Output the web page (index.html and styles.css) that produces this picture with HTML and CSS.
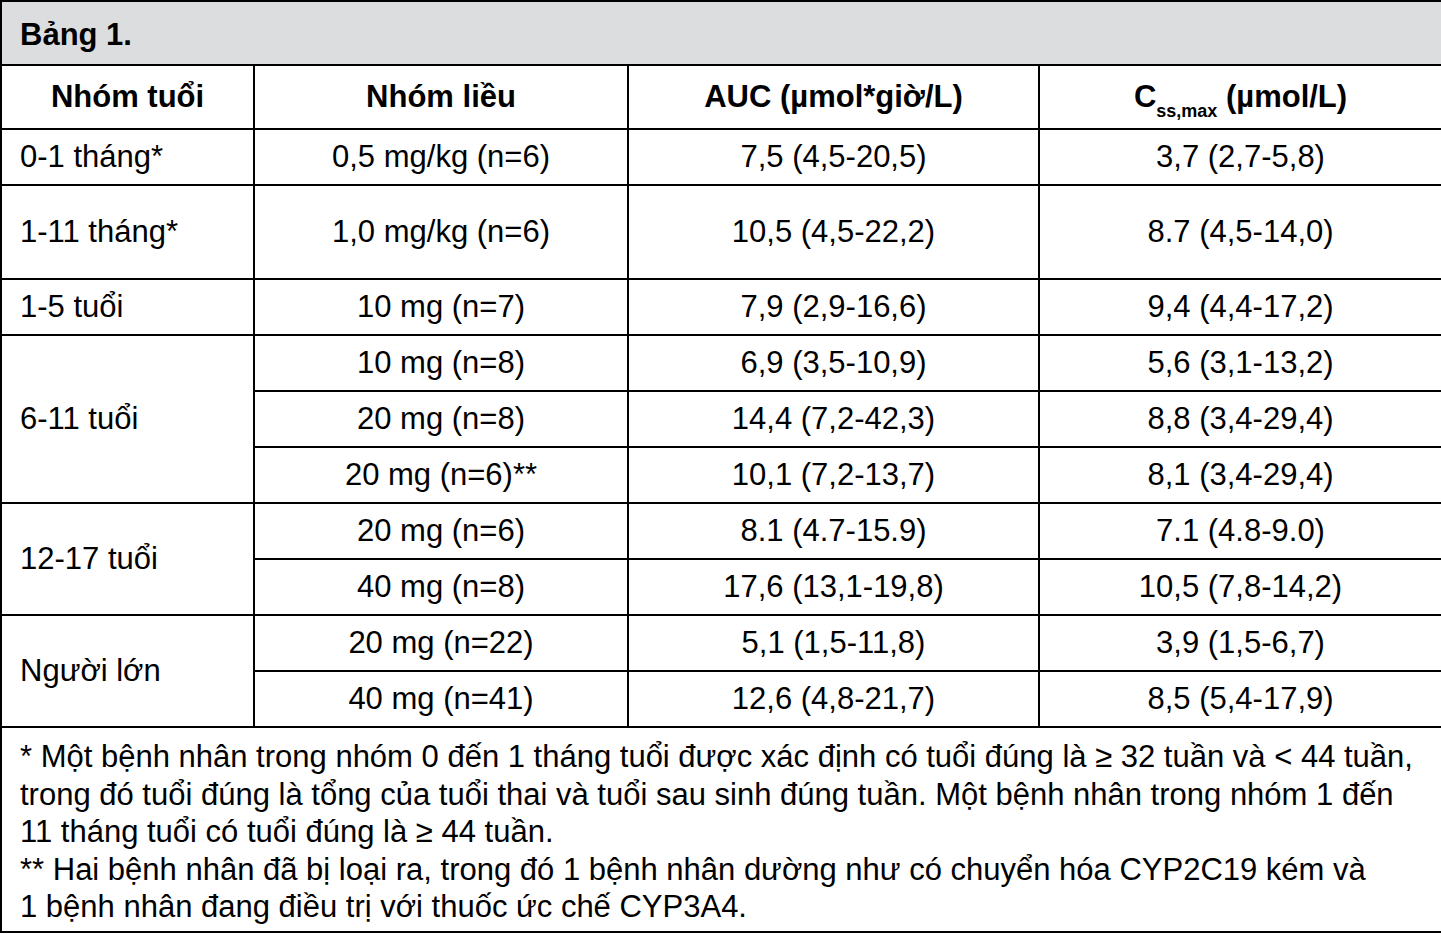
FILE: index.html
```html
<!DOCTYPE html>
<html lang="vi">
<head>
<meta charset="utf-8">
<link rel="stylesheet" href="styles.css">
</head>
<body>
<table class="tbl">
  <colgroup>
    <col class="c1"><col class="c2"><col class="c3"><col class="c4">
  </colgroup>
  <tr class="title-row"><td colspan="4" class="title">Bảng 1.</td></tr>
  <tr class="head-row">
    <th>Nhóm tuổi</th>
    <th>Nhóm liều</th>
    <th>AUC (µmol*giờ/L)</th>
    <th>C<sub>ss,max</sub> (µmol/L)</th>
  </tr>
  <tr class="r"><td class="age">0-1 tháng*</td><td>0,5 mg/kg (n=6)</td><td>7,5 (4,5-20,5)</td><td>3,7 (2,7-5,8)</td></tr>
  <tr class="r tall"><td class="age">1-11 tháng*</td><td>1,0 mg/kg (n=6)</td><td>10,5 (4,5-22,2)</td><td>8.7 (4,5-14,0)</td></tr>
  <tr class="r"><td class="age">1-5 tuổi</td><td>10 mg (n=7)</td><td>7,9 (2,9-16,6)</td><td>9,4 (4,4-17,2)</td></tr>
  <tr class="r"><td class="age" rowspan="3">6-11 tuổi</td><td>10 mg (n=8)</td><td>6,9 (3,5-10,9)</td><td>5,6 (3,1-13,2)</td></tr>
  <tr class="r"><td>20 mg (n=8)</td><td>14,4 (7,2-42,3)</td><td>8,8 (3,4-29,4)</td></tr>
  <tr class="r"><td>20 mg (n=6)**</td><td>10,1 (7,2-13,7)</td><td>8,1 (3,4-29,4)</td></tr>
  <tr class="r"><td class="age" rowspan="2">12-17 tuổi</td><td>20 mg (n=6)</td><td>8.1 (4.7-15.9)</td><td>7.1 (4.8-9.0)</td></tr>
  <tr class="r"><td>40 mg (n=8)</td><td>17,6 (13,1-19,8)</td><td>10,5 (7,8-14,2)</td></tr>
  <tr class="r"><td class="age" rowspan="2">Người lớn</td><td>20 mg (n=22)</td><td>5,1 (1,5-11,8)</td><td>3,9 (1,5-6,7)</td></tr>
  <tr class="r"><td>40 mg (n=41)</td><td>12,6 (4,8-21,7)</td><td>8,5 (5,4-17,9)</td></tr>
  <tr class="foot-row"><td colspan="4" class="foot">
    <p>* Một bệnh nhân trong nhóm 0 đến 1 tháng tuổi được xác định có tuổi đúng là ≥ 32 tuần và &lt; 44 tuần, trong đó tuổi đúng là tổng của tuổi thai và tuổi sau sinh đúng tuần. Một bệnh nhân trong nhóm 1 đến 11 tháng tuổi có tuổi đúng là ≥ 44 tuần.</p>
    <p>** Hai bệnh nhân đã bị loại ra, trong đó 1 bệnh nhân dường như có chuyển hóa CYP2C19 kém và 1&nbsp;bệnh nhân đang điều trị với thuốc ức chế CYP3A4.</p>
  </td></tr>
</table>
</body>
</html>
```

FILE: styles.css
```css
html, body {
  margin: 0;
  padding: 0;
  background: #fff;
}
body {
  font-family: "Liberation Sans", Arial, sans-serif;
  color: #000;
}
.tbl {
  width: 1441px;
  border-collapse: collapse;
  table-layout: fixed;
  font-size: 31px;
}
.c1 { width: 253px; }
.c2 { width: 374px; }
.c3 { width: 411px; }
.c4 { width: 403px; }
.tbl td, .tbl th {
  border: 2px solid #000;
  padding: 0;
  text-align: center;
  vertical-align: middle;
}
.title-row { height: 64px; }
.tbl td.title {
  background: #dcdddf;
  text-align: left;
  font-weight: bold;
  padding-left: 18px;
  padding-top: 3px;
}
.head-row { height: 64px; }
.head-row th {
  font-weight: bold;
}
.head-row sub {
  font-size: 18px;
  vertical-align: -10px;
  line-height: 0;
}
.r { height: 56px; }
.r.tall { height: 94px; }
.tbl td.age {
  text-align: left;
  padding-left: 18px;
}
.tbl td.foot {
  text-align: left;
  padding: 10px 14px 5px 18px;
  vertical-align: top;
  line-height: 37.5px;
}
.foot p {
  margin: 0;
}
```
